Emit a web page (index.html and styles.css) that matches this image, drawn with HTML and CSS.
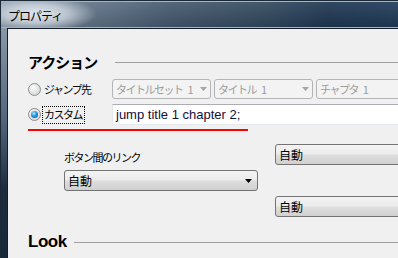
FILE: index.html
```html
<!DOCTYPE html>
<html lang="ja">

<head>
    <meta charset="UTF-8">
    <title>プロパティ</title>
    <link rel="stylesheet" href="styles.css">
</head>

<body>
    <div class="window">
        <div class="titlebar">
            <span class="title">プロパティ</span>
        </div>
        <div class="frame">
            <div class="client">

                <div class="group-head">
                    <span class="head-txt">アクション</span>
                    <span class="head-line first"></span>
                </div>

                <div class="action-row jump">
                    <label class="opt">
                        <span class="radio"></span>
                        <span class="opt-txt">ジャンプ先</span>
                    </label>
                    <div class="combos">
                        <div class="combo off">
                            <span class="kana">タイトルセット 1</span>
                            <svg class="arrow" width="7" height="4"><polygon points="0,0 7,0 3.5,4" fill="#a4a4a4"/></svg>
                        </div>
                        <div class="combo off">
                            <span class="kana">タイトル 1</span>
                            <svg class="arrow" width="7" height="4"><polygon points="0,0 7,0 3.5,4" fill="#a4a4a4"/></svg>
                        </div>
                        <div class="combo off">
                            <span class="kana">チャプタ 1</span>
                        </div>
                    </div>
                </div>

                <div class="action-row custom">
                    <label class="opt">
                        <span class="radio checked"></span>
                        <span class="opt-txt focus">カスタム</span>
                    </label>
                    <div class="textbox">jump title 1 chapter 2;</div>
                </div>

                <div class="redline"></div>

                <div class="links">
                    <span class="link-lbl kana">ボタン間のリンク</span>
                    <div class="combo on right top">
                        <span>自動</span>
                    </div>
                    <div class="combo on left">
                        <span>自動</span>
                        <svg class="arrow" width="7" height="4"><polygon points="0,0 7,0 3.5,4" fill="#000"/></svg>
                    </div>
                    <div class="combo on right bottom">
                        <span>自動</span>
                    </div>
                </div>

                <div class="group-head look">
                    <span class="head-txt latin">Look</span>
                    <span class="head-line"></span>
                </div>

            </div>
        </div>
    </div>
</body>

</html>
```

FILE: styles.css
```css
body {
    margin: 0;
    overflow: hidden;
    background: #f0f0f0;
    font-family: "Noto Sans CJK JP", "Noto Sans", sans-serif;
}

.window {
    width: 430px;
    height: 258px;
    border-top: 1px solid #1b2937;
    border-left: 1px solid #1b2937;
    display: flex;
    flex-direction: column;
}

.titlebar {
    box-sizing: border-box;
    height: 27px;
    border-top: 1px solid #a8b5c1;
    border-bottom: 1px solid #a3b4c6;
    background:
        radial-gradient(ellipse 60px 18px at 36px 12px, rgba(232, 237, 242, 0.95) 0%, rgba(220, 228, 236, 0.7) 50%, rgba(220, 228, 236, 0) 100%),
        linear-gradient(to bottom, rgba(255, 255, 255, 0.08), rgba(0, 0, 0, 0.12)),
        linear-gradient(to right, #8797a6 0%, #66798c 18%, #45596f 40%, #33495f 62%, #1f3853 76%, #203a57 88%, #24405e 100%);
    padding-left: 7px;
}

.title {
    display: inline-block;
    font-size: 12px;
    line-height: 24px;
    letter-spacing: -1px;
    color: #000;
}

.frame {
    flex: 1;
    padding-left: 6px;
    background: linear-gradient(to bottom, #8a98a6 0%, #52657a 40%, #1c2c3d 70%, #16283a 100%);
}

.client {
    height: 100%;
    box-sizing: border-box;
    border-top: 1px solid #131d28;
    border-left: 1px solid #131d28;
    background: #f0f0f0;
    padding: 23px 0 0 20px;
    font-size: 12px;
}

.kana {
    font-size: 11px;
    letter-spacing: -1.5px;
    word-spacing: 4px;
}

/* group headings */
.group-head {
    display: flex;
    align-items: center;
    height: 20px;
}

.head-txt {
    font-size: 15px;
    font-weight: bold;
    line-height: 20px;
    letter-spacing: -1px;
    color: #000;
}

.head-txt.latin {
    font-family: "Liberation Sans", sans-serif;
    font-size: 17px;
    letter-spacing: -0.5px;
}

.head-line {
    flex: 1;
    height: 1px;
    background: #a0a0a0;
    margin-left: 7px;
}

.head-line.first {
    margin-left: 18px;
}

.look {
    margin-top: 15px;
}

/* action rows */
.action-row {
    display: flex;
    align-items: center;
}

.jump {
    height: 20px;
    margin-top: 7px;
}

.custom {
    height: 21px;
    margin-top: 5px;
}

.opt {
    flex: none;
    width: 84px;
    display: flex;
    align-items: center;
    color: #000;
}

.radio {
    box-sizing: border-box;
    width: 13px;
    height: 13px;
    border-radius: 50%;
    border: 1px solid #8b8e91;
    background: radial-gradient(circle at 40% 35%, #ffffff 0%, #e6e6e6 45%, #c9cbcd 100%);
    position: relative;
}

.radio.checked::after {
    content: "";
    position: absolute;
    left: 2px;
    top: 2px;
    width: 7px;
    height: 7px;
    border-radius: 50%;
    background: radial-gradient(circle at 40% 35%, #b9ecff 0%, #2f9ae4 40%, #0d4f98 100%);
}

.opt-txt {
    margin-left: 2px;
    line-height: 15px;
    padding: 0 1px;
    font-size: 11px;
    letter-spacing: -1.5px;
}

.opt-txt.focus {
    outline: 1px dotted #000;
    outline-offset: 0;
    padding: 0 2px 1px 1px;
}

.combos {
    display: flex;
    gap: 3px;
}

.combo {
    box-sizing: border-box;
    flex: none;
    width: 99px;
    min-width: 0;
    overflow: hidden;
    white-space: nowrap;
    display: flex;
    align-items: center;
    justify-content: space-between;
    border-radius: 3px;
    padding: 0 3px 0 3px;
    line-height: 15px;
}

.combo.off {
    height: 20px;
    border: 1px solid #b5b5b5;
    background: #f3f3f3;
    color: #9c9c9c;
}

.combo.on {
    height: 21px;
    border: 1px solid #737373;
    background: linear-gradient(to bottom, #f3f3f3 0%, #ececec 48%, #dedede 52%, #d0d0d0 100%);
    color: #000;
    padding-right: 5px;
}

.arrow {
    display: block;
    flex: none;
}

.textbox {
    box-sizing: border-box;
    flex: 1;
    height: 21px;
    border: 1px solid #e3e9ef;
    border-top-color: #abadb3;
    background: #fff;
    padding-left: 3px;
    font-family: "Liberation Sans", sans-serif;
    font-size: 13px;
    line-height: 19px;
    color: #10103a;
}

.redline {
    width: 220px;
    height: 2px;
    margin-top: 4px;
    background: #f00;
}

/* links section */
.links {
    display: grid;
    grid-template-columns: 194px 150px;
    grid-template-rows: 21px 21px 21px;
    column-gap: 17px;
    row-gap: 5px;
    margin: 13px 0 0 36px;
}

.link-lbl {
    grid-column: 1;
    grid-row: 1;
    align-self: end;
    line-height: 15px;
    color: #000;
}

.combo.left {
    width: 194px;
    grid-column: 1;
    grid-row: 2;
}

.combo.right {
    width: 150px;
    grid-column: 2;
}

.combo.top {
    grid-row: 1;
}

.combo.bottom {
    grid-row: 3;
}
```
